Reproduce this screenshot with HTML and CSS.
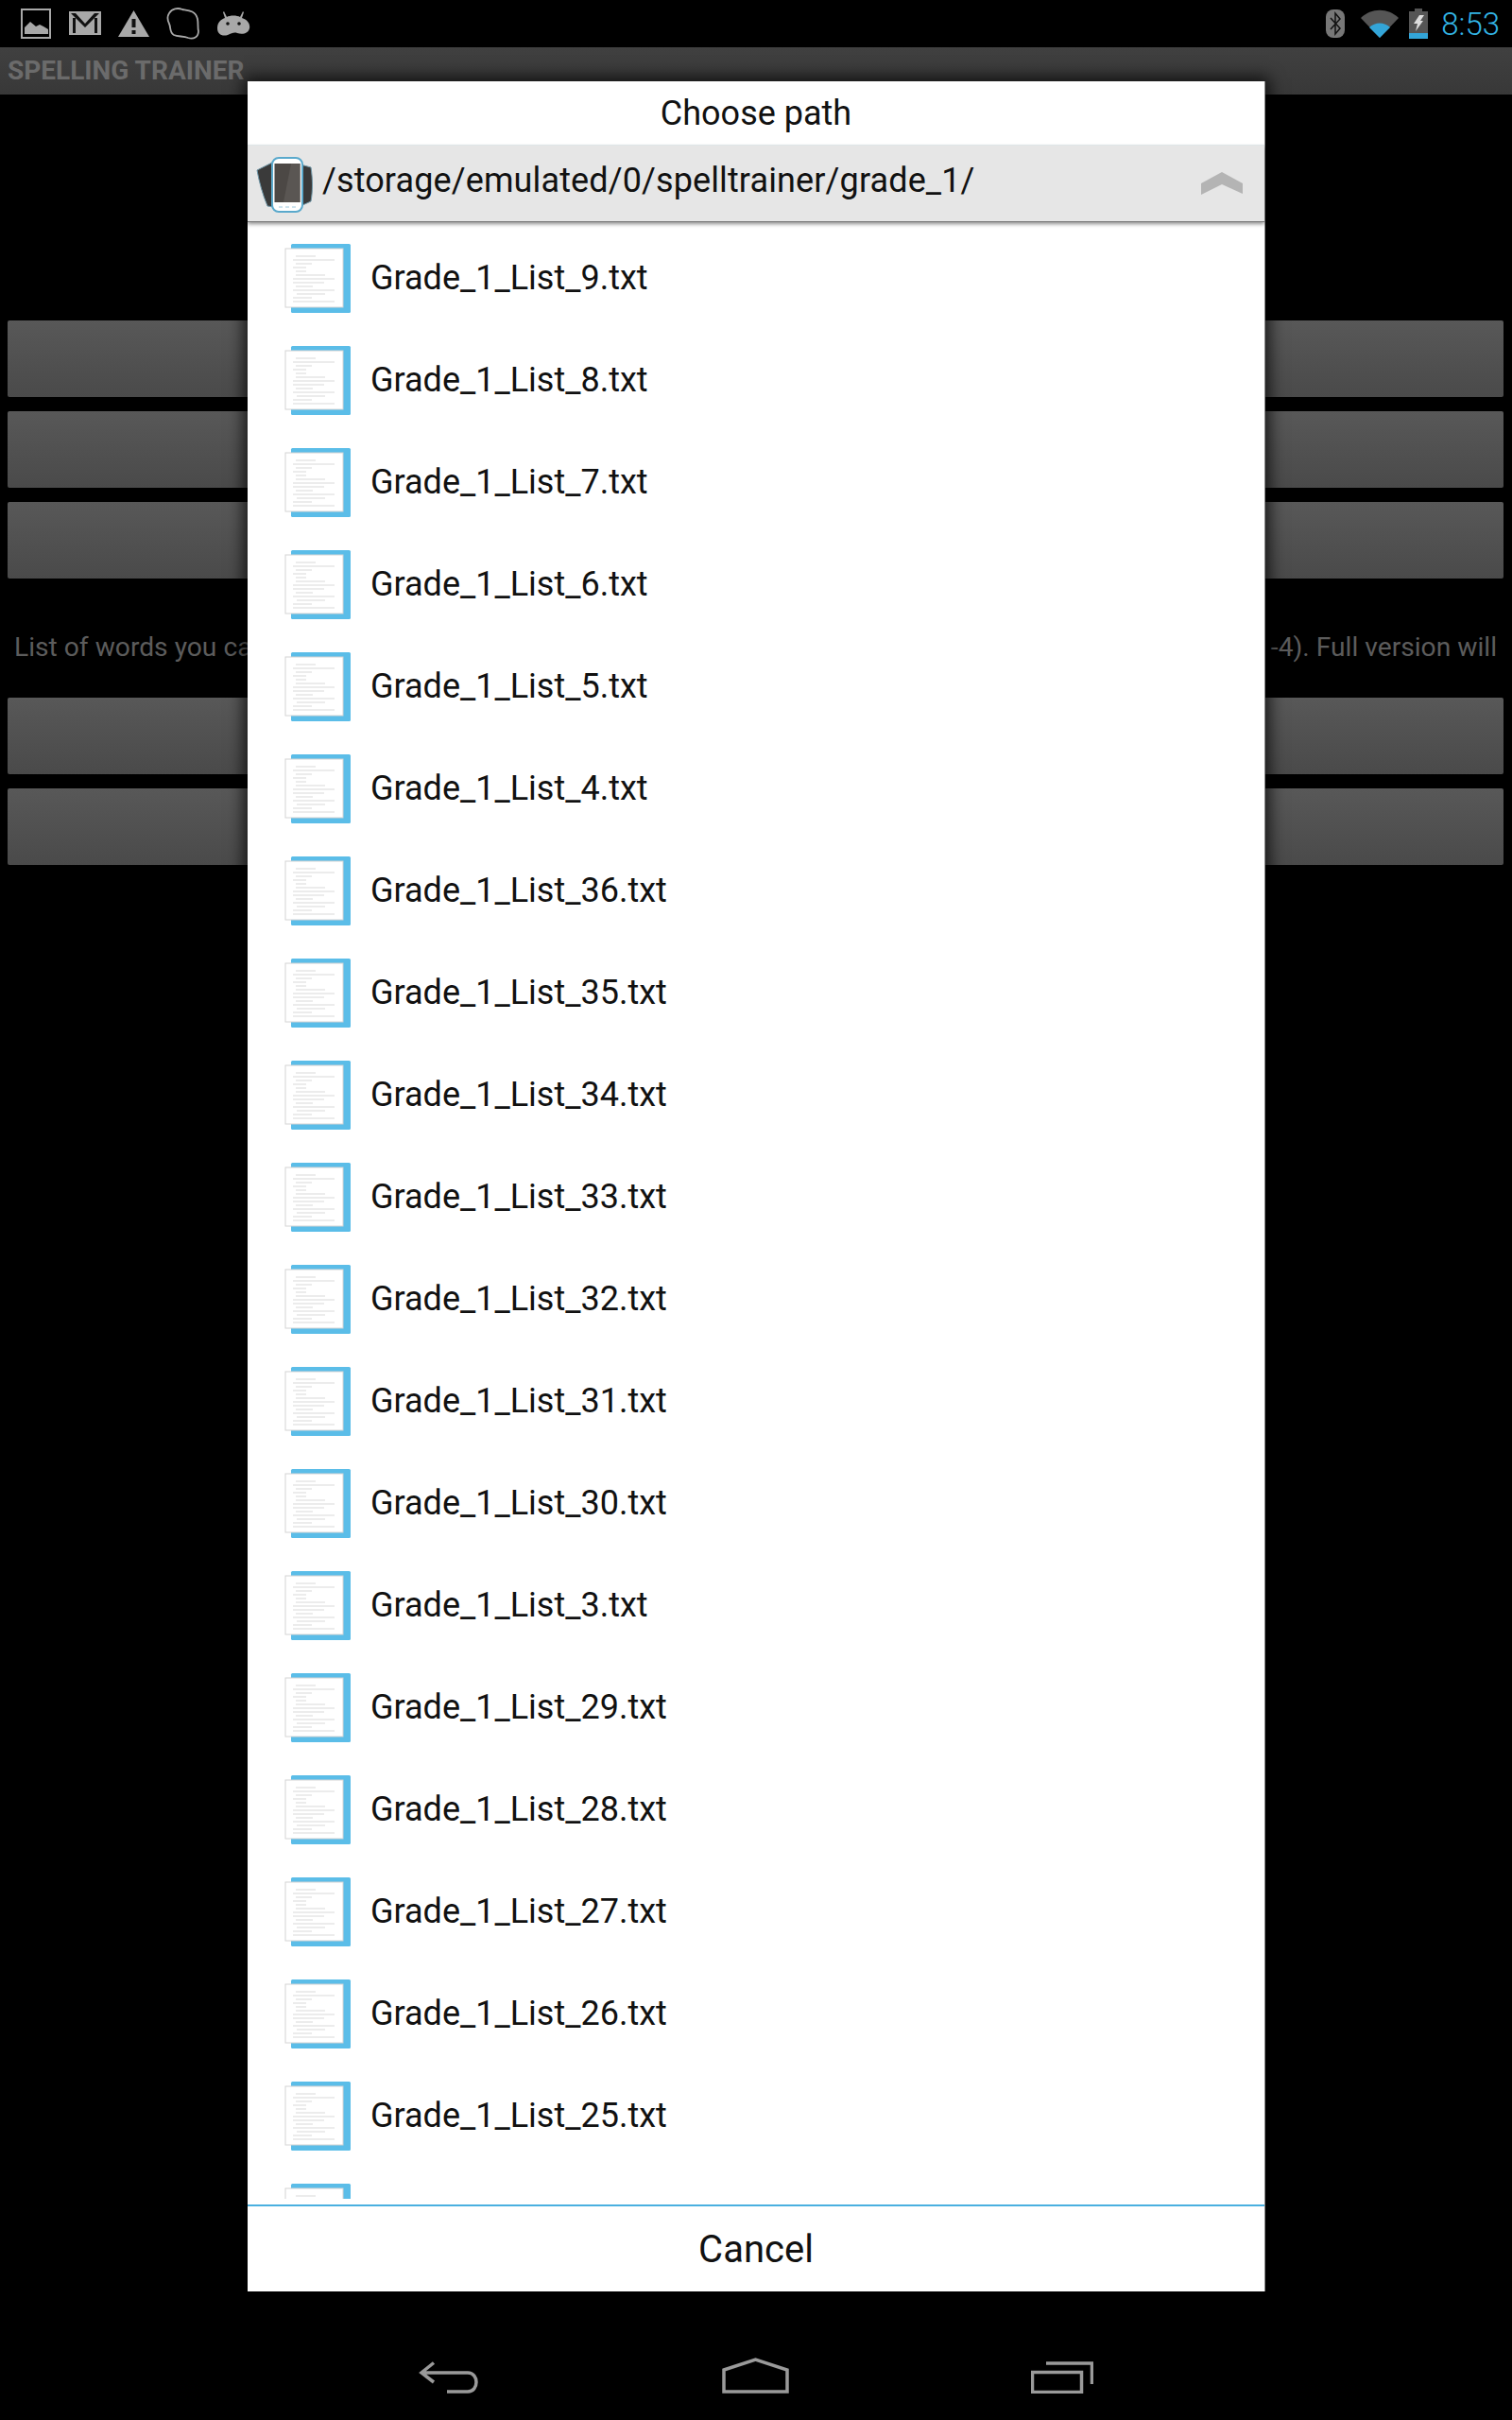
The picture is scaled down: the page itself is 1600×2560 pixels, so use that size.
FILE: index.html
```html
<!DOCTYPE html>
<html lang="en">
<head>
  <meta charset="UTF-8" />
  <meta name="viewport" content="width=device-width, initial-scale=1.0"/>
  <title>Spelling Trainer - Choose path</title>
  <link rel="stylesheet" href="styles.css">
</head>
<body>
  <svg class="defs" width="0" height="0">
    <symbol id="doc" viewBox="0 0 72 74">
      <rect x="8" y="0" width="63" height="73" rx="1.5" fill="#5bbde8"/>
      <rect x="2" y="5" width="61" height="62" fill="#fff" stroke="#d4d4d4" stroke-width="1"/>
      <g stroke="#c8c8c8" stroke-width="0.7">
        <path d="M13 13H34M10 17H54M13 21H30M10 25H24M13 29H24M13 33H44M10 37H54M10 41H43M13 45H31M10 49H54M14 53H44M10 57H30M10 61H54"/>
      </g>
    </symbol>
  </svg>

  <div class="statusbar">
    <div class="status-left">
      <svg width="34" height="34" viewBox="0 0 34 34"><rect x="2" y="2" width="30" height="30" fill="none" stroke="#a8a8a8" stroke-width="2"/><path d="M5 28V21L11 15L17 20L21 18L25 20L30 23V28Z" fill="#a8a8a8"/></svg>
      <svg width="36" height="28" viewBox="0 0 36 28"><path d="M1 1H35V26H1Z" fill="#a8a8a8"/><path d="M3 3H8L18 14L28 3H33L18 18Z" fill="#111"/><path d="M5 8H8V24H5ZM28 8H31V24H28Z" fill="#111"/></svg>
      <svg width="34" height="30" viewBox="0 0 34 30"><path d="M16.500 1L33 29H0Z" fill="#a8a8a8"/><path d="M14.500 10H18.500V19H14.500ZM14.500 22H18.500V26H14.500Z" fill="#111"/></svg>
      <svg width="36" height="36" viewBox="0 0 36 36"><path d="M3 7C6 2 12 1 17 3C23 4 31 4 33 13C34 18 33 22 34 26C34 32 29 35 23 33C18 31 12 32 8 30C3 27 5 22 3 18C1 14 1 10 3 7Z" fill="none" stroke="#a8a8a8" stroke-width="1.800"/></svg>
      <svg width="36" height="30" viewBox="0 0 36 30"><path d="M8 2L11 8C14 6 22 6 25 8L28 2L29 3L27 9C33 11 36 15 35 20C34 25 28 27 22 25C19 24 16 25 12 27C6 29 1 26 1 20C1 14 4 11 9 9L7 3Z" fill="#a8a8a8"/><circle cx="12" cy="15" r="1.800" fill="#111"/><circle cx="24" cy="15" r="1.800" fill="#111"/></svg>
    </div>
    <div class="status-right">
      <svg class="ic-bt" width="20" height="30" viewBox="0 0 20 30"><rect width="20" height="30" rx="8" fill="#777"/><path d="M5 9L15 20L10 26V4L15 10L5 21" fill="none" stroke="#111" stroke-width="1.500"/></svg>
      <svg class="ic-wifi" width="40" height="30" viewBox="0 0 40 30"><path d="M0 9C11 -2 29 -2 40 9L20 30Z" fill="#555"/><path d="M9 19C15 13 25 13 31 19L20 30Z" fill="#33a5d8"/></svg>
      <svg class="ic-batt" width="20" height="32" viewBox="0 0 20 32"><path d="M6 0H14V3H20V32H0V3H6Z" fill="#555"/><rect y="26" width="20" height="6" fill="#33a5d8"/><path d="M11 7H16L12 13H15L7 24L9 16H5Z" fill="#ddd"/></svg>
      <span class="clock">8:53</span>
    </div>
  </div>

  <div class="actionbar">SPELLING TRAINER</div>

  <div class="content">
    <div class="bg-btn"></div>
    <div class="bg-btn"></div>
    <div class="bg-btn"></div>
    <p class="note"><span>List of words you ca</span><span>-4). Full version will</span></p>
    <div class="bg-btn"></div>
    <div class="bg-btn"></div>
  </div>

  <div class="navbar">
    <svg width="65" height="34" viewBox="0 0 65 34"><path d="M16 1.500L3 12L16 22M3 12H52C64 12 64 32 52 32H30" fill="none" stroke="#9a9a9a" stroke-width="3.500"/></svg>
    <svg width="71" height="38" viewBox="0 0 71 38"><path d="M2 13L35.500 2L69 13V36H2Z" fill="none" stroke="#9a9a9a" stroke-width="3.500"/></svg>
    <svg width="66" height="34" viewBox="0 0 66 34"><rect x="1.500" y="11.500" width="52" height="21" fill="none" stroke="#9a9a9a" stroke-width="3.500"/><path d="M16 2H64.500V24" fill="none" stroke="#9a9a9a" stroke-width="3.500"/></svg>
  </div>

  <div class="dialog">
    <div class="dialog-title">Choose path</div>
    <div class="path-bar">
      <svg class="storage-icon" width="70" height="64" viewBox="0 0 70 64">
        <path d="M2 18L20 9V57L13 56C8 44 4 30 2 18Z" fill="#3a3a3a" stroke="#6f97a8" stroke-width="1"/>
        <path d="M48 12L59 15C61 28 61 40 59 51L48 56Z" fill="#3a3a3a" stroke="#6f97a8" stroke-width="1"/>
        <rect x="18" y="5" width="32" height="57" rx="7" fill="#fff" stroke="#5aa9cc" stroke-width="2"/>
        <rect x="20.500" y="11" width="27" height="41" fill="#4c4845"/>
        <path d="M38 11H47.500V52H30Z" fill="#5a5653"/>
        <path d="M25 57H29M32 57H36M39 57H43" stroke="#9cc8dc" stroke-width="1"/>
      </svg>
      <span class="path-text">/storage/emulated/0/spelltrainer/grade_1/</span>
      <svg class="up-icon" width="44" height="24" viewBox="0 0 44 24"><path d="M0 12L22 0L44 12V23L22 13L0 24Z" fill="#b4b4b4"/></svg>
    </div>
    <div class="file-list">
      <div class="file-row"><svg class="doc-icon"><use href="#doc"/></svg><span>Grade_1_List_9.txt</span></div>
      <div class="file-row"><svg class="doc-icon"><use href="#doc"/></svg><span>Grade_1_List_8.txt</span></div>
      <div class="file-row"><svg class="doc-icon"><use href="#doc"/></svg><span>Grade_1_List_7.txt</span></div>
      <div class="file-row"><svg class="doc-icon"><use href="#doc"/></svg><span>Grade_1_List_6.txt</span></div>
      <div class="file-row"><svg class="doc-icon"><use href="#doc"/></svg><span>Grade_1_List_5.txt</span></div>
      <div class="file-row"><svg class="doc-icon"><use href="#doc"/></svg><span>Grade_1_List_4.txt</span></div>
      <div class="file-row"><svg class="doc-icon"><use href="#doc"/></svg><span>Grade_1_List_36.txt</span></div>
      <div class="file-row"><svg class="doc-icon"><use href="#doc"/></svg><span>Grade_1_List_35.txt</span></div>
      <div class="file-row"><svg class="doc-icon"><use href="#doc"/></svg><span>Grade_1_List_34.txt</span></div>
      <div class="file-row"><svg class="doc-icon"><use href="#doc"/></svg><span>Grade_1_List_33.txt</span></div>
      <div class="file-row"><svg class="doc-icon"><use href="#doc"/></svg><span>Grade_1_List_32.txt</span></div>
      <div class="file-row"><svg class="doc-icon"><use href="#doc"/></svg><span>Grade_1_List_31.txt</span></div>
      <div class="file-row"><svg class="doc-icon"><use href="#doc"/></svg><span>Grade_1_List_30.txt</span></div>
      <div class="file-row"><svg class="doc-icon"><use href="#doc"/></svg><span>Grade_1_List_3.txt</span></div>
      <div class="file-row"><svg class="doc-icon"><use href="#doc"/></svg><span>Grade_1_List_29.txt</span></div>
      <div class="file-row"><svg class="doc-icon"><use href="#doc"/></svg><span>Grade_1_List_28.txt</span></div>
      <div class="file-row"><svg class="doc-icon"><use href="#doc"/></svg><span>Grade_1_List_27.txt</span></div>
      <div class="file-row"><svg class="doc-icon"><use href="#doc"/></svg><span>Grade_1_List_26.txt</span></div>
      <div class="file-row"><svg class="doc-icon"><use href="#doc"/></svg><span>Grade_1_List_25.txt</span></div>
      <div class="file-row"><svg class="doc-icon"><use href="#doc"/></svg></div>
    </div>
    <div class="dialog-footer">Cancel</div>
  </div>
</body>
</html>
```

FILE: styles.css
```css
:root {
  --blue: #33b5e5;
  --btn-top: #585858;
  --btn-bottom: #4a4a4a;
}

html, body {
  margin: 0;
  height: 2560px;
}

body {
  background-color: #000;
  font-family: 'Roboto', sans-serif;
  display: flex;
  flex-direction: column;
  overflow: hidden;
  position: relative;
}

.defs {
  position: absolute;
}

.statusbar {
  height: 50px;
  display: flex;
  justify-content: space-between;
  align-items: center;
  padding: 0 13px 0 21px;
}

.status-left {
  display: flex;
  align-items: center;
  gap: 17px;
}

.status-right {
  display: flex;
  align-items: center;
}

.ic-wifi {
  margin-left: 17px;
}

.ic-batt {
  margin-left: 11px;
}

.clock {
  color: var(--blue);
  font-size: 33px;
  font-weight: 300;
  margin-left: 14px;
}

.actionbar {
  height: 50px;
  line-height: 50px;
  padding-left: 8px;
  background: linear-gradient(#404040, #383838);
  color: #6b6b6b;
  font-size: 28px;
  font-weight: bold;
}

.content {
  flex: 1;
  padding: 239px 9px 0 8px;
  display: flex;
  flex-direction: column;
  gap: 15px;
}

.bg-btn {
  height: 81px;
  border-radius: 2px;
  background: linear-gradient(var(--btn-top), var(--btn-bottom));
}

.note {
  margin: 34px 0 16px;
  padding: 0 7px;
  height: 46px;
  line-height: 47px;
  display: flex;
  justify-content: space-between;
  color: #5c5c5c;
  font-size: 28.200px;
}

.navbar {
  height: 136px;
  box-sizing: border-box;
  padding: 0 0 28px 443px;
  display: flex;
  align-items: flex-end;
  gap: 256px;
}

/* file chooser sits over the whole activity */
.dialog {
  position: absolute;
  left: 262px;
  top: 86px;
  width: 1077px;
  height: 2338px;
  box-sizing: border-box;
  background: #fff;
  border-right: 1px solid #888;
  box-shadow: 0 0 16px 4px rgba(0, 0, 0, 0.75);
  display: flex;
  flex-direction: column;
}

.dialog-title {
  height: 67px;
  line-height: 69px;
  text-align: center;
  color: #111;
  font-size: 36px;
  flex-shrink: 0;
}

.path-bar {
  height: 81px;
  box-sizing: border-box;
  flex-shrink: 0;
  display: flex;
  align-items: center;
  background: #e6e6e6;
  border-top: 1px solid #dfe6e8;
  box-shadow: 0 1px 0 #777, 0 3px 4px rgba(0, 0, 0, 0.45);
  position: relative;
}

.storage-icon {
  margin-left: 8px;
  flex-shrink: 0;
}

.path-text {
  margin-left: 1px;
  margin-bottom: 7px;
  color: #111;
  font-size: 36px;
  letter-spacing: 0.120px;
}

.up-icon {
  position: absolute;
  right: 23px;
  top: 28px;
}

.file-list {
  flex: 1;
  margin-bottom: 6px;
  padding-top: 7px;
  overflow: hidden;
}

.file-row {
  height: 108px;
  display: flex;
  align-items: center;
  gap: 20px;
  padding-left: 38px;
  color: #111;
  font-size: 36px;
}

.file-row span {
  margin-bottom: 2px;
}

.doc-icon {
  width: 72px;
  height: 74px;
  flex-shrink: 0;
}

.dialog-footer {
  height: 92px;
  box-sizing: border-box;
  flex-shrink: 0;
  border-top: 2px solid #4ab0e0;
  line-height: 91px;
  text-align: center;
  color: #111;
  font-size: 40px;
}
```
